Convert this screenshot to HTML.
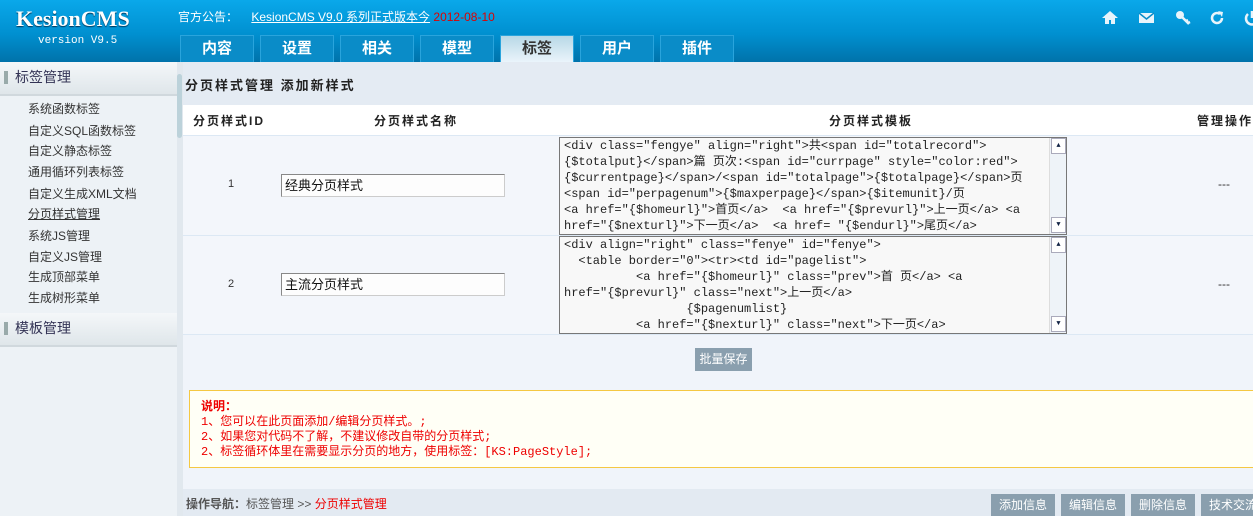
<!DOCTYPE html>
<html><head><meta charset="utf-8"><style>
*{margin:0;padding:0;box-sizing:border-box}
body{width:1253px;height:516px;overflow:hidden;position:relative;font-family:"Liberation Sans","Noto Sans CJK SC",sans-serif;font-size:12px;color:#333;background:#f0f4fa}
.abs{position:absolute}
#hd{left:0;top:0;width:1253px;height:62px;background:linear-gradient(#0aa8ea,#0090d0 55%,#0072aa)}
.logo{left:16px;top:6px;color:#fff;font:bold 22px "Liberation Serif",serif;text-shadow:0 1px 1px #035}
.ver{left:38px;top:35px;color:#fff;font:11px "Liberation Mono",monospace}
.notice{left:178px;top:8px;color:#fff;font-size:12px}
.notice u{margin-left:10px}
.notice b{color:#d00;font-weight:normal}
.tab{top:35px;height:27px;width:74px;background:#0a8cc8;border:1px solid #2aa4dc;border-bottom:none;color:#fff;font-weight:bold;font-size:15px;text-align:center;line-height:26px}
.tab.on{background:linear-gradient(#b8d8e6,#eaf4fb);color:#333}
.ic{top:9px;width:18px;height:18px}
#side{left:0;top:62px;width:177px;height:454px;background:#edf2f6}
.sh{left:0;width:177px;height:34px;background:linear-gradient(#f4f7f9,#dfe6ea);border-bottom:2px solid #d0d8dd;font-size:14px;color:#335;line-height:30px;padding-left:15px}
.sh:before{content:"";position:absolute;left:4px;top:9px;width:4px;height:13px;background:#9aa}
.si{left:28px;font-size:12px;color:#333}
#sb{left:177px;top:62px;width:6px;height:454px;background:#e1e8ee}
#sb i{position:absolute;left:0;top:12px;width:5px;height:64px;background:#bcd2da;border-radius:3px}
#main{left:183px;top:62px;width:1070px;height:454px;background:#f0f4fa}
.tt{left:183px;top:62px;width:1070px;height:43px;background:#e4ebf3;font-weight:bold;font-size:13px;padding:13px 0 0 2px;letter-spacing:2px;color:#222}
.th{top:105px;height:30px;background:#fff;width:1070px;left:183px}
.thc{top:112px;font-weight:bold;font-size:12px;color:#222;letter-spacing:2px}
.row{left:183px;width:1070px;background:#f3f6fb;border-top:1px solid #dce8f4}
.inp{width:224px;height:23px;border:1px solid #888;border-right-color:#ccc;border-bottom-color:#ccc;background:#fdfdfd;font-size:13px;line-height:19px;padding:1px 3px;color:#111}
.ta{width:508px;height:98px;border:1px solid #777;background:#f8f8f8;font:12px/16px "Liberation Mono","Noto Sans CJK SC",monospace;color:#222;padding:0 20px 0 4px;overflow:hidden;white-space:pre}
.scr{right:0;top:0;width:17px;height:96px;background:#eef3f8;border-left:1px solid #ddd}
.scr i{position:absolute;left:1px;width:15px;height:16px;background:#fff;border:1px solid #aab;font-style:normal;font-size:7px;color:#124;text-align:center;line-height:14px}
.btn{background:#8a9fae;color:#fff;font-size:12px;text-align:center;line-height:22px}
.note{left:189px;top:390px;width:1070px;height:78px;background:#fffff6;border:1px solid #f5c842;color:#e00;font:12px/15px "Liberation Mono","Noto Sans CJK SC",monospace;padding:9px 0 0 11px}
.ft{left:183px;top:489px;width:1070px;height:27px;background:#e3eaf2}
</style></head><body>
<div id="hd" class="abs"></div>
<div class="abs logo">KesionCMS</div>
<div class="abs ver">version V9.5</div>
<div class="abs notice">官方公告： <u>KesionCMS V9.0 系列正式版本今</u> <b>2012-08-10</b></div>
<div class="abs tab" style="left:180px">内容</div>
<div class="abs tab" style="left:260px">设置</div>
<div class="abs tab" style="left:340px">相关</div>
<div class="abs tab" style="left:420px">模型</div>
<div class="abs tab on" style="left:500px">标签</div>
<div class="abs tab" style="left:580px">用户</div>
<div class="abs tab" style="left:660px">插件</div>
<svg class="abs ic" style="left:1101px" viewBox="0 0 18 18"><path d="M9 2L1 9h3v6h4v-4h2v4h4V9h3z" fill="#e8f4fb"/></svg>
<svg class="abs ic" style="left:1138px" viewBox="0 0 18 18"><rect x="1" y="4" width="15" height="10" fill="#e8f4fb"/><path d="M1 4l7.5 6L16 4" stroke="#0a8cc8" stroke-width="1.5" fill="none"/></svg>
<svg class="abs ic" style="left:1174px" viewBox="0 0 18 18"><circle cx="6" cy="6" r="4" fill="#e8f4fb"/><path d="M8 8l7 7M12 12l2-1M14 14l2-1" stroke="#e8f4fb" stroke-width="2.5"/></svg>
<svg class="abs ic" style="left:1208px" viewBox="0 0 18 18"><path d="M14 9a5 5 0 1 1-2-4" stroke="#e8f4fb" stroke-width="2.5" fill="none"/><path d="M10 2l5 1-1 5z" fill="#e8f4fb"/></svg>
<svg class="abs ic" style="left:1243px" viewBox="0 0 18 18"><path d="M5 5a6 6 0 1 0 8 0" stroke="#e8f4fb" stroke-width="2.5" fill="none"/><path d="M9 2v7" stroke="#e8f4fb" stroke-width="2.5"/></svg>

<div id="side" class="abs"></div>
<div class="abs sh" style="top:62px">标签管理</div>
<div class="abs si" style="top:100px">系统函数标签</div>
<div class="abs si" style="top:122px">自定义SQL函数标签</div>
<div class="abs si" style="top:142px">自定义静态标签</div>
<div class="abs si" style="top:163px">通用循环列表标签</div>
<div class="abs si" style="top:185px">自定义生成XML文档</div>
<div class="abs si" style="top:205px;text-decoration:underline">分页样式管理</div>
<div class="abs si" style="top:227px">系统JS管理</div>
<div class="abs si" style="top:248px">自定义JS管理</div>
<div class="abs si" style="top:268px">生成顶部菜单</div>
<div class="abs si" style="top:289px">生成树形菜单</div>
<div class="abs sh" style="top:313px">模板管理</div>
<div id="sb" class="abs"><i></i></div>

<div id="main" class="abs"></div>
<div class="abs tt">分页样式管理 添加新样式</div>
<div class="abs th"></div>
<div class="abs thc" style="left:193px">分页样式ID</div>
<div class="abs thc" style="left:374px">分页样式名称</div>
<div class="abs thc" style="left:829px">分页样式模板</div>
<div class="abs thc" style="left:1197px">管理操作</div>

<div class="abs row" style="top:135px;height:100px"></div>
<div class="abs row" style="top:235px;height:100px"></div>
<div class="abs row" style="top:334px;height:1px"></div>
<div class="abs" style="left:228px;top:178px;font-size:11px">1</div>
<div class="abs" style="left:228px;top:278px;font-size:11px">2</div>
<div class="abs inp" style="left:281px;top:174px">经典分页样式</div>
<div class="abs inp" style="left:281px;top:273px">主流分页样式</div>
<div class="abs" style="left:1218px;top:177px">---</div>
<div class="abs" style="left:1218px;top:277px">---</div>
<div class="abs ta" style="left:559px;top:137px">&lt;div class="fengye" align="right"&gt;共&lt;span id="totalrecord"&gt;
{$totalput}&lt;/span&gt;篇 页次:&lt;span id="currpage" style="color:red"&gt;
{$currentpage}&lt;/span&gt;/&lt;span id="totalpage"&gt;{$totalpage}&lt;/span&gt;页
&lt;span id="perpagenum"&gt;{$maxperpage}&lt;/span&gt;{$itemunit}/页
&lt;a href="{$homeurl}"&gt;首页&lt;/a&gt;  &lt;a href="{$prevurl}"&gt;上一页&lt;/a&gt; &lt;a
href="{$nexturl}"&gt;下一页&lt;/a&gt;  &lt;a href= "{$endurl}"&gt;尾页&lt;/a&gt;<div class="abs scr"><i style="top:0">▲</i><i style="top:79px">▼</i></div></div>
<div class="abs ta" style="left:559px;top:236px">&lt;div align="right" class="fenye" id="fenye"&gt;
  &lt;table border="0"&gt;&lt;tr&gt;&lt;td id="pagelist"&gt;
          &lt;a href="{$homeurl}" class="prev"&gt;首 页&lt;/a&gt; &lt;a
href="{$prevurl}" class="next"&gt;上一页&lt;/a&gt;
                 {$pagenumlist}
          &lt;a href="{$nexturl}" class="next"&gt;下一页&lt;/a&gt;<div class="abs scr"><i style="top:0">▲</i><i style="top:79px">▼</i></div></div>

<div class="abs btn" style="left:695px;top:348px;width:57px;height:23px">批量保存</div>

<div class="abs note"><b>说明：</b><br>1、您可以在此页面添加/编辑分页样式。;<br>2、如果您对代码不了解，不建议修改自带的分页样式;<br>2、标签循环体里在需要显示分页的地方，使用标签：[KS:PageStyle];</div>

<div class="abs ft"></div>
<div class="abs" style="left:186px;top:495px;font-size:12px;color:#555"><b>操作导航：</b>标签管理 &gt;&gt; <span style="color:#e00">分页样式管理</span></div>
<div class="abs btn" style="left:991px;top:494px;width:64px">添加信息</div>
<div class="abs btn" style="left:1061px;top:494px;width:64px">编辑信息</div>
<div class="abs btn" style="left:1131px;top:494px;width:64px">删除信息</div>
<div class="abs btn" style="left:1201px;top:494px;width:64px">技术交流</div>
</body></html>
